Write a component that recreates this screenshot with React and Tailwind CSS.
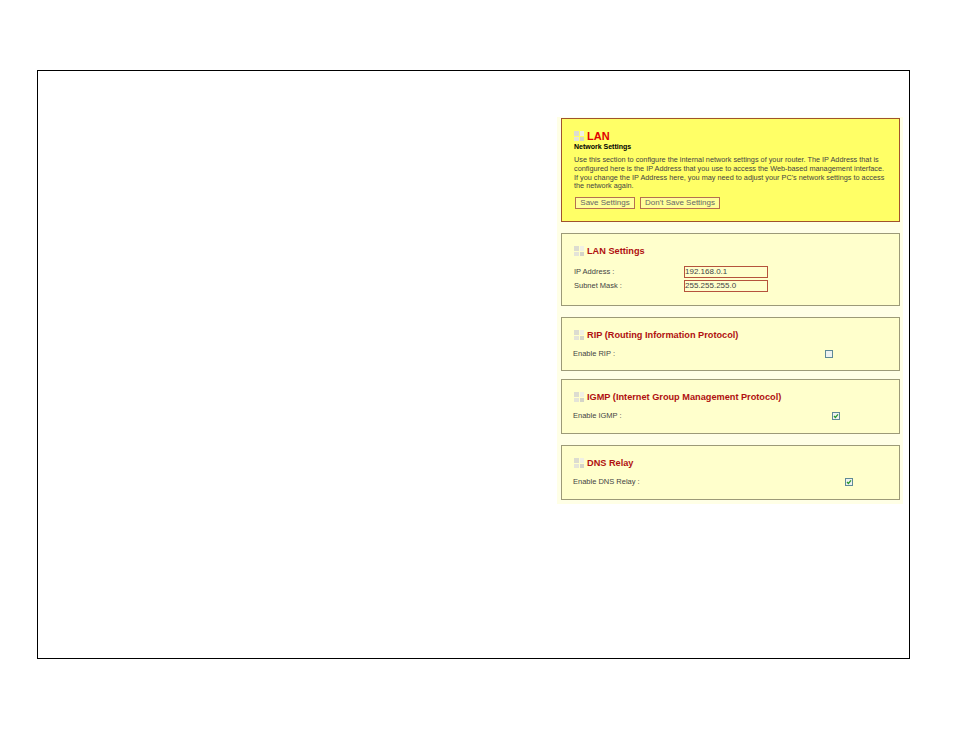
const Icon = () => (
  <span className="grid h-[10px] w-[10px] shrink-0 grid-cols-2 gap-[1px]">
    <span className="bg-[#dcdcd0]" />
    <span className="bg-[#f0f0e4]" />
    <span className="bg-[#e4e4d8]" />
    <span className="bg-[#d4d4c8]" />
  </span>
)

const Check = ({ checked }) => (
  <span className="flex h-[8px] w-[8px] items-center justify-center border border-[#5f8a96] bg-[#eef2f0]">
    {checked && (
      <svg viewBox="0 0 6 6" className="h-[6px] w-[6px]">
        <path d="M1 3l1.4 1.5L5 1.4" fill="none" stroke="#2a9a2a" strokeWidth="1.3" />
      </svg>
    )}
  </span>
)

const Card = ({ title, className, children }) => (
  <section className={`ml-[4px] mr-[3px] border border-[#9c9a78] bg-[#ffffcc] ${className}`}>
    <h2 className="flex items-center gap-[3px] pl-[12px] pt-[11px] text-[9.2px] leading-[12px] font-bold text-[#b01010]">
      <Icon />
      {title}
    </h2>
    {children}
  </section>
)

const CheckRow = ({ label, left, checked }) => (
  <div className="mt-[8px] flex items-center pl-[11px] text-[7.5px] leading-[10px] text-[#444]">
    <span className={left}>{label}</span>
    <Check checked={checked} />
  </div>
)

const Field = ({ label, value }) => (
  <div className="flex h-[14px] items-center pl-[12px] text-[7.5px] text-[#444]">
    <span className="w-[110px]">{label}</span>
    <span className="flex h-[12px] w-[84px] items-center border border-[#b5533c] bg-[#ffffcc] text-[8px]">{value}</span>
  </div>
)

const App = () => {
  return (
    <div className="h-[737px] bg-white pt-[70px] pl-[37px] font-['Liberation_Sans',Arial,sans-serif]">
      <div className="flex h-[589px] w-[873px] justify-end border border-black pt-[46px] pr-[6px]">
        <div className="h-[387px] w-[346px] bg-[#ffffe6] pt-[1px]">
          <section className="ml-[4px] mr-[3px] h-[104px] border border-[#a0522d] bg-[#ffff66] pl-[12px] pt-[11px]">
            <h1 className="flex items-center gap-[3px] text-[11px] leading-[12px] font-bold text-[#e00000]">
              <Icon />
              LAN
            </h1>
            <h3 className="text-[7px] leading-[9px] font-bold text-black">Network Settings</h3>
            <p className="mt-[5px] whitespace-nowrap text-[7.3px] leading-[8.8px] text-[#444]">
              Use this section to configure the internal network settings of your router. The IP Address that is<br />
              configured here is the IP Address that you use to access the Web-based management interface.<br />
              If you change the IP Address here, you may need to adjust your PC's network settings to access<br />
              the network again.
            </p>
            <div className="mt-[6px] ml-[1px] flex gap-[5px]">
              <button className="h-[12px] w-[60px] border border-[#b5704f] bg-[#ffff99] text-[8px] leading-[10px] text-[#666]">Save Settings</button>
              <button className="h-[12px] w-[80px] border border-[#b5704f] bg-[#ffff99] text-[8px] leading-[10px] text-[#666]">Don't Save Settings</button>
            </div>
          </section>
          <Card title="LAN Settings" className="mt-[11px] h-[73px]">
            <div className="mt-[8px]">
              <Field label="IP Address :" value="192.168.0.1" />
              <Field label="Subnet Mask :" value="255.255.255.0" />
            </div>
          </Card>
          <Card title="RIP (Routing Information Protocol)" className="mt-[11px] h-[54px]">
            <CheckRow label="Enable RIP :" left="w-[252px]" />
          </Card>
          <Card title="IGMP (Internet Group Management Protocol)" className="mt-[8px] h-[55px]">
            <CheckRow label="Enable IGMP :" left="w-[259px]" checked />
          </Card>
          <Card title="DNS Relay" className="mt-[11px] h-[55px]">
            <CheckRow label="Enable DNS Relay :" left="w-[272px]" checked />
          </Card>
        </div>
      </div>
    </div>
  )
}

export default App
